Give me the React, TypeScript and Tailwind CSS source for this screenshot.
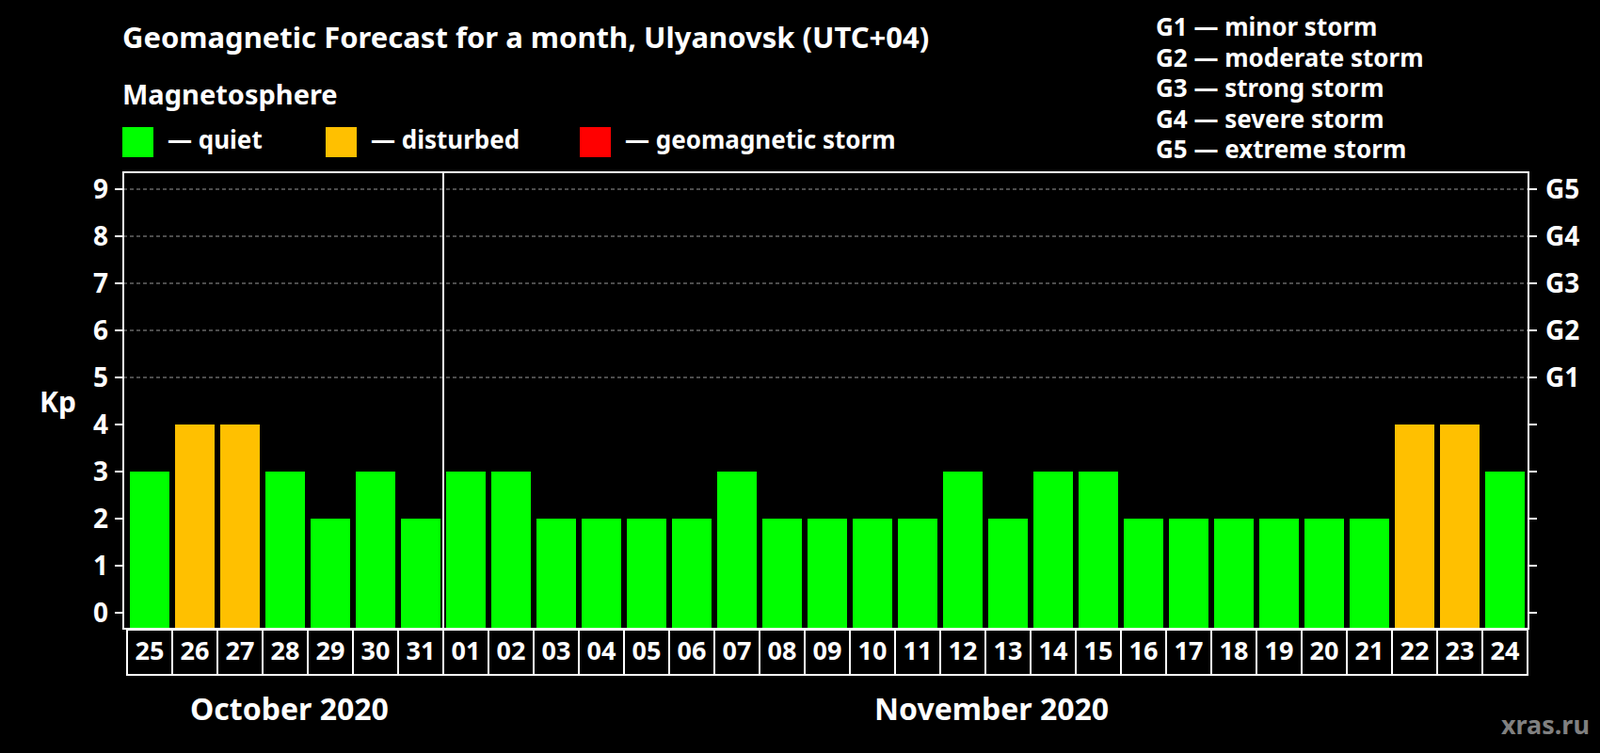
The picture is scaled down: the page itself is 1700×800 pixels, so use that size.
const days = [
  ['25', 3], ['26', 4], ['27', 4], ['28', 3], ['29', 2], ['30', 3], ['31', 2],
  ['01', 3], ['02', 3], ['03', 2], ['04', 2], ['05', 2], ['06', 2], ['07', 3],
  ['08', 2], ['09', 2], ['10', 2], ['11', 2], ['12', 3], ['13', 2], ['14', 3],
  ['15', 3], ['16', 2], ['17', 2], ['18', 2], ['19', 2], ['20', 2], ['21', 2],
  ['22', 4], ['23', 4], ['24', 3],
] as const;

const stormLegend = [
  'G1 — minor storm',
  'G2 — moderate storm',
  'G3 — strong storm',
  'G4 — severe storm',
  'G5 — extreme storm',
];

const y = (v: number) => 651 - 50 * v;

function barColor(v: number) {
  if (v >= 5) return '#ff0000';
  if (v >= 4) return '#ffc000';
  return '#00ff00';
}

function LegendItem({ swatch, label }: { swatch: string; label: string }) {
  return (
    <div className="flex items-start gap-[15px]">
      <div className={`w-[33px] h-[32px] ${swatch}`} />
      <span className="text-[26px] leading-none font-bold">{label}</span>
    </div>
  );
}

export default function App() {
  return (
    <div className="w-[1700px] h-[800px] bg-black text-white overflow-hidden font-['Liberation_Sans',Arial,sans-serif]">
      {/* Header */}
      <div className="flex h-[175px]">
        <div className="pl-[130px] w-[1228px]">
          <h1 className="mt-[24px] text-[31px] leading-none font-bold">
            Geomagnetic Forecast for a month, Ulyanovsk (UTC+04)
          </h1>
          <div className="mt-[30px] text-[29px] leading-none font-bold">Magnetosphere</div>
          <div className="mt-[21px] flex">
            <div className="w-[216px]"><LegendItem swatch="bg-[#00ff00]" label="— quiet" /></div>
            <div className="w-[270px]"><LegendItem swatch="bg-[#ffc000]" label="— disturbed" /></div>
            <LegendItem swatch="bg-[#ff0000]" label="— geomagnetic storm" />
          </div>
        </div>
        <div className="pt-[12px] text-[26px] leading-[32.5px] font-bold">
          {stormLegend.map((s) => (
            <div key={s}>{s}</div>
          ))}
        </div>
      </div>

      {/* Chart */}
      <svg width="1700" height="625" viewBox="0 175 1700 625" className="block font-bold">
        {[5, 6, 7, 8, 9].map((v) => (
          <line key={v} x1={131} x2={1624} y1={y(v)} y2={y(v)} stroke="#9a9a9a" strokeWidth={1} strokeDasharray="4 3" />
        ))}
        {days.map(([d, v], i) => (
          <rect key={d} x={138 + 48 * i} y={y(v)} width={42} height={668 - y(v)} fill={barColor(v)} />
        ))}
        <rect x={131} y={183} width={1493} height={485} fill="none" stroke="#fff" strokeWidth={2} />
        <line x1={471} x2={471} y1={183} y2={668} stroke="#fff" strokeWidth={2} />
        {Array.from({ length: 10 }, (_, v) => (
          <g key={v}>
            <line x1={122} x2={131} y1={y(v)} y2={y(v)} stroke="#fff" strokeWidth={2} />
            <line x1={1624} x2={1633} y1={y(v)} y2={y(v)} stroke="#fff" strokeWidth={2} />
            <text x={115} y={y(v) + 10} textAnchor="end" fill="#fff" fontSize={28}>
              {v}
            </text>
            {v >= 5 && (
              <text x={1642} y={y(v) + 10} fill="#fff" fontSize={28}>
                G{v - 4}
              </text>
            )}
          </g>
        ))}
        <text x={42} y={438} fill="#fff" fontSize={30}>Kp</text>
        {days.map(([d], i) => (
          <g key={d}>
            <rect x={135 + 48 * i} y={669} width={48} height={48} fill="none" stroke="#fff" strokeWidth={2} />
            <text x={159 + 48 * i} y={701} textAnchor="middle" fill="#fff" fontSize={27}>
              {d}
            </text>
          </g>
        ))}
        <text x={202} y={765} fill="#fff" fontSize={32}>October 2020</text>
        <text x={929} y={765} fill="#fff" fontSize={32}>November 2020</text>
        <text x={1689} y={780} textAnchor="end" fill="#808080" fontSize={27}>xras.ru</text>
      </svg>
    </div>
  );
}
